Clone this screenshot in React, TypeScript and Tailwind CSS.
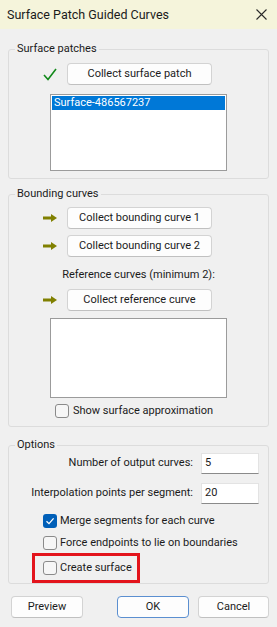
import React from "react";

const Btn = ({ children, className = "" }: { children: React.ReactNode; className?: string }) => (
  <div
    className={`h-[22px] flex items-center justify-center bg-[#fdfdfd] border border-[#d3d3d3] border-b-[#c0c0c0] rounded-[4px] text-[#1b1b1b] whitespace-nowrap ${className}`}
  >
    {children}
  </div>
);

const Arrow = () => (
  <svg width="14" height="8" viewBox="0 0 14 8" className="shrink-0">
    <rect x="0" y="2.5" width="9" height="3" fill="#808000" />
    <polygon points="8,0 14,4 8,8" fill="#808000" />
  </svg>
);

const Check = () => (
  <svg width="14" height="13" viewBox="0 0 14 13" className="shrink-0">
    <polyline points="1,7 5,11.5 13,1" fill="none" stroke="#12891a" strokeWidth="1.6" />
  </svg>
);

const Box = ({ checked = false }: { checked?: boolean }) =>
  checked ? (
    <div className="w-[14px] h-[14px] rounded-[3px] bg-[#005fb8] flex items-center justify-center shrink-0">
      <svg width="10" height="10" viewBox="0 0 10 10">
        <polyline points="1.5,5.2 4,7.6 8.6,2.4" fill="none" stroke="#ffffff" strokeWidth="1.3" />
      </svg>
    </div>
  ) : (
    <div className="w-[14px] h-[14px] rounded-[3px] border border-[#8a8a8a] bg-[#f6f6f6] shrink-0" />
  );

export default function App() {
  return (
    <div className="w-[277px] h-[627px] bg-[#f0f0f0] flex flex-col font-['Roboto',sans-serif] text-[11px] text-[#1b1b1b] overflow-hidden whitespace-nowrap">
      <div className="h-[29px] shrink-0 bg-[#f5f4db] flex items-center justify-between pl-[7px] pr-[10px]">
        <span className="text-[12.5px] leading-[16px] text-[#1a1a1a]">Surface Patch Guided Curves</span>
        <svg width="11" height="11" viewBox="0 0 11 11">
          <path d="M0.5 0.5 L10.5 10.5 M10.5 0.5 L0.5 10.5" stroke="#2a2a2a" strokeWidth="1.1" />
        </svg>
      </div>
      <div className="px-[8px] flex flex-col">
        {/* Surface patches */}
        <fieldset className="mt-[12px] border border-[#dcdcdc] rounded-[3px] pb-[7px]">
          <legend className="ml-[6px] px-[2px] leading-[16px]">Surface patches</legend>
          <div className="flex items-center mt-[6px]">
            <div className="ml-[34px] w-[14px] flex justify-center">
              <Check />
            </div>
            <Btn className="ml-[10px] w-[145px]">Collect surface patch</Btn>
          </div>
          <div className="ml-[41px] mt-[9px] w-[177px] h-[77px] bg-white border border-[#9b9b9b] p-[1px]">
            <div className="h-[14px] leading-[14px] bg-[#0078d7] text-white pl-[2px]">Surface-486567237</div>
          </div>
        </fieldset>

        {/* Bounding curves */}
        <fieldset className="mt-[7px] border border-[#dcdcdc] rounded-[3px] pb-[7px]">
          <legend className="ml-[6px] px-[2px] leading-[16px]">Bounding curves</legend>
          <div className="flex items-center mt-[5px]">
            <div className="ml-[34px] w-[14px] flex justify-center">
              <Arrow />
            </div>
            <Btn className="ml-[10px] w-[145px]">Collect bounding curve 1</Btn>
          </div>
          <div className="flex items-center mt-[6px]">
            <div className="ml-[34px] w-[14px] flex justify-center">
              <Arrow />
            </div>
            <Btn className="ml-[10px] w-[145px]">Collect bounding curve 2</Btn>
          </div>
          <div className="mt-[10px] leading-[16px] text-center">Reference curves (minimum 2):</div>
          <div className="flex items-center mt-[6px]">
            <div className="ml-[34px] w-[14px] flex justify-center">
              <Arrow />
            </div>
            <Btn className="ml-[10px] w-[145px]">Collect reference curve</Btn>
          </div>
          <div className="ml-[41px] mt-[7px] w-[177px] h-[80px] bg-white border border-[#9b9b9b]" />
          <div className="flex items-center mt-[5px] ml-[46px] h-[16px]">
            <Box />
            <span className="ml-[4px] leading-[16px]">Show surface approximation</span>
          </div>
        </fieldset>

        {/* Options */}
        <fieldset className="mt-[10px] border border-[#dcdcdc] rounded-[3px]">
          <legend className="ml-[6px] px-[2px] leading-[16px]">Options</legend>
          <div className="flex items-center justify-end pr-[9px]">
            <span>Number of output curves:</span>
            <div className="ml-[8px] w-[58px] h-[21px] bg-white border border-[#e3e3e3] border-b-[#8a8a8a] flex items-center pl-[3px]">
              5
            </div>
          </div>
          <div className="flex items-center justify-end pr-[9px] mt-[9px]">
            <span>Interpolation points per segment:</span>
            <div className="ml-[8px] w-[58px] h-[21px] bg-white border border-[#e3e3e3] border-b-[#8a8a8a] flex items-center pl-[3px]">
              20
            </div>
          </div>
          <div className="flex items-center h-[22px] mt-[6px] ml-[34px]">
            <Box checked />
            <span className="ml-[3px]">Merge segments for each curve</span>
          </div>
          <div className="flex items-center h-[22px] ml-[34px]">
            <Box />
            <span className="ml-[3px]">Force endpoints to lie on boundaries</span>
          </div>
          <div className="ml-[23px] mt-[-1px] w-[108px] h-[30px] border-[3px] border-[#e3141c] flex items-center pl-[8px]">
            <Box />
            <span className="ml-[3px]">Create surface</span>
          </div>
        </fieldset>

        <div className="flex mt-[12px]">
          <Btn className="ml-[3px] w-[72px]">Preview</Btn>
          <Btn className="ml-[34px] w-[72px] !border-[#5b8fd0]">OK</Btn>
          <Btn className="ml-[9px] w-[71px]">Cancel</Btn>
        </div>
      </div>
    </div>
  );
}
